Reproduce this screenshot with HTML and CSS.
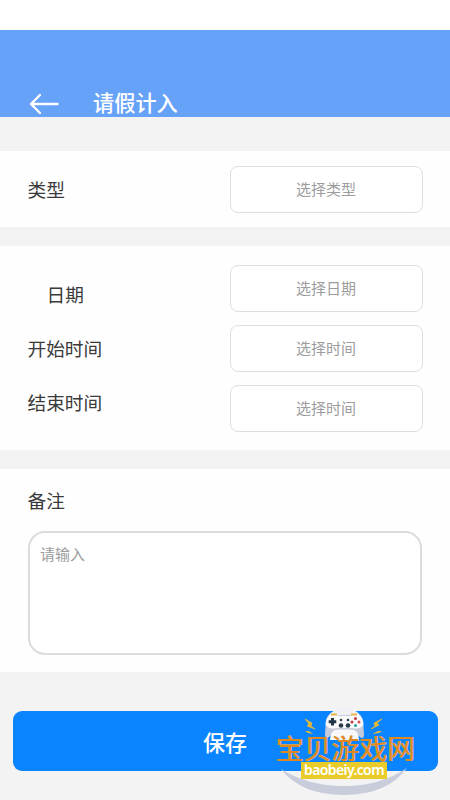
FILE: index.html
```html
<!DOCTYPE html>
<html lang="zh-CN">
<head>
<meta charset="utf-8">
<title>请假计入</title>
<link rel="stylesheet" href="styles.css">
</head>
<body>
<main class="page">
  <header class="header">
    <svg class="back" viewBox="0 0 30 22" width="30" height="22"><path d="M11 2L2 11L11 20M2 11H28.500"/></svg>
    <h1 class="title">请假计入</h1>
  </header>
  <section class="card type-card">
    <span class="label">类型</span>
    <button class="picker">选择类型</button>
  </section>
  <section class="card time-card">
    <div class="labels">
      <span class="label indent">日期</span>
      <span class="label">开始时间</span>
      <span class="label">结束时间</span>
    </div>
    <div class="pickers">
      <button class="picker">选择日期</button>
      <button class="picker">选择时间</button>
      <button class="picker">选择时间</button>
    </div>
  </section>
  <section class="card note-card">
    <span class="label">备注</span>
    <div class="note">请输入</div>
  </section>
  <button class="save">保存</button>
  <div class="watermark">
    <svg class="art" viewBox="265 700 160 100" width="160" height="100">
      <path d="M281 769Q308 786 344 786Q380 786 407 768Q387 795 344 795Q301 795 281 769Z" fill="#c9ccdb"/>
      <path d="M305 719L312 723L311 726L315 729L307 726L309 724ZM382 719L374 723L375 726L371 729L379 725L377 723Z" fill="#e8b935" stroke="#e8b935" stroke-width=".7"/>
      <path d="M305 731L309 731L313 734L308 733ZM382 731L378 731L372 734L379 733Z" fill="#e8b935"/>
      <ellipse cx="344.500" cy="724" rx="19" ry="16" fill="#f0f1f5"/>
      <path d="M329 715Q326 717 325 734Q325 740 329 737L336 730H353L360 737Q364 740 364 734Q363 717 360 715Z" fill="#c7cad8"/>
      <path d="M330 740Q330 729.500 338 729.500H351Q359 729.500 359 740Z" fill="#f8f8fa"/>
      <path d="M332 714Q326 716 326 725Q329 730 337 728H352Q360 730 363 725Q363 716 357 714Q352 714 350 716H339Q336 714 332 714Z" fill="#fafafd"/>
      <path d="M331 714.500H337M351 714.500H357" stroke="#e8b34a" stroke-width="2"/>
      <path d="M332.500 718V725.500M328.700 721.700H336.300" stroke="#203546" stroke-width="3"/>
      <g fill="#293c4c"><circle cx="341" cy="720" r="1.300"/><circle cx="348" cy="720" r="1.300"/><circle cx="341" cy="725.500" r="2.300"/><circle cx="348" cy="725.500" r="2.300"/></g>
      <circle cx="355.500" cy="718.500" r="1.500" fill="#c63846"/><circle cx="359" cy="722" r="1.500" fill="#df4a4c"/><circle cx="355.500" cy="725.500" r="1.500" fill="#22a29b"/><circle cx="352" cy="722" r="1.500" fill="#c63846"/>
    </svg>
    <span class="brand">宝贝游戏网</span>
    <span class="domain">baobeiy.com</span>
  </div>
</main>
</body>
</html>
```

FILE: styles.css
```css
* { box-sizing: border-box; }
body { margin: 0; background: #f3f3f3; color: #3a3a3a; font-family: "Noto Sans CJK SC", sans-serif; }
button { display: block; padding: 0; font-family: inherit; }
.page { position: relative; width: 450px; height: 800px; overflow: hidden; border-top: 30px solid #fff; }
.header { height: 87px; margin-bottom: 34px; padding: 0 29px; background: #67a2f9; display: flex; align-items: flex-end; }
.back { margin-bottom: 2px; fill: none; stroke: #fff; stroke-width: 2.4; stroke-linecap: round; stroke-linejoin: round; }
.title { margin: 0 0 0 34px; color: #fff; font-size: 21.2px; line-height: 30px; font-weight: 500; }
.card { background: #fefefe; padding: 0 27.5px; }
.label { display: block; font-size: 18.7px; line-height: 28px; }
.type-card { height: 76px; margin-bottom: 19px; display: flex; justify-content: space-between; align-items: center; }
.time-card { height: 204px; margin-bottom: 18.5px; display: flex; justify-content: space-between; }
.labels { padding-top: 34px; display: flex; flex-direction: column; gap: 26px; }
.indent { padding-left: 19px; }
.pickers { padding-top: 19px; display: flex; flex-direction: column; gap: 13px; }
.picker { width: 193px; height: 47px; border: 1px solid #dfdfdf; border-radius: 8px; background: #fff; color: #9c9c9c; font-size: 15px; line-height: 22px; padding-bottom: 1px; }
.note-card { height: 203.500px; padding-top: 17px; margin-bottom: 39px; }
.note { width: 394.5px; height: 124px; margin-top: 17px; padding: 9px 10.5px; border: 2px solid #dcdcdc; border-radius: 17px; background: #fff; color: #9c9c9c; font-size: 15px; line-height: 24px; }
.save { width: 425px; height: 60px; margin: 0 auto; border: 0; border-radius: 9px; background: #0a85ff; color: #fff; font-size: 22px; line-height: 32px; font-weight: 500; }
.watermark { position: absolute; left: 265px; top: 670px; width: 160px; height: 100px; }
.art { position: absolute; inset: 0; }
.brand { position: absolute; left: 11px; top: 34px; color: #e0871f; font-size: 27.8px; line-height: 27px; white-space: nowrap; text-shadow: .5px 0 #d9c6a4, -.5px 0 #d9c6a4; }
.domain { position: absolute; left: 36px; top: 62px; width: 86px; height: 17px; background: #e9cc2a; color: #fff; font: 600 14px/16px "Noto Sans", sans-serif; letter-spacing: -.6px; text-align: center; }
```
